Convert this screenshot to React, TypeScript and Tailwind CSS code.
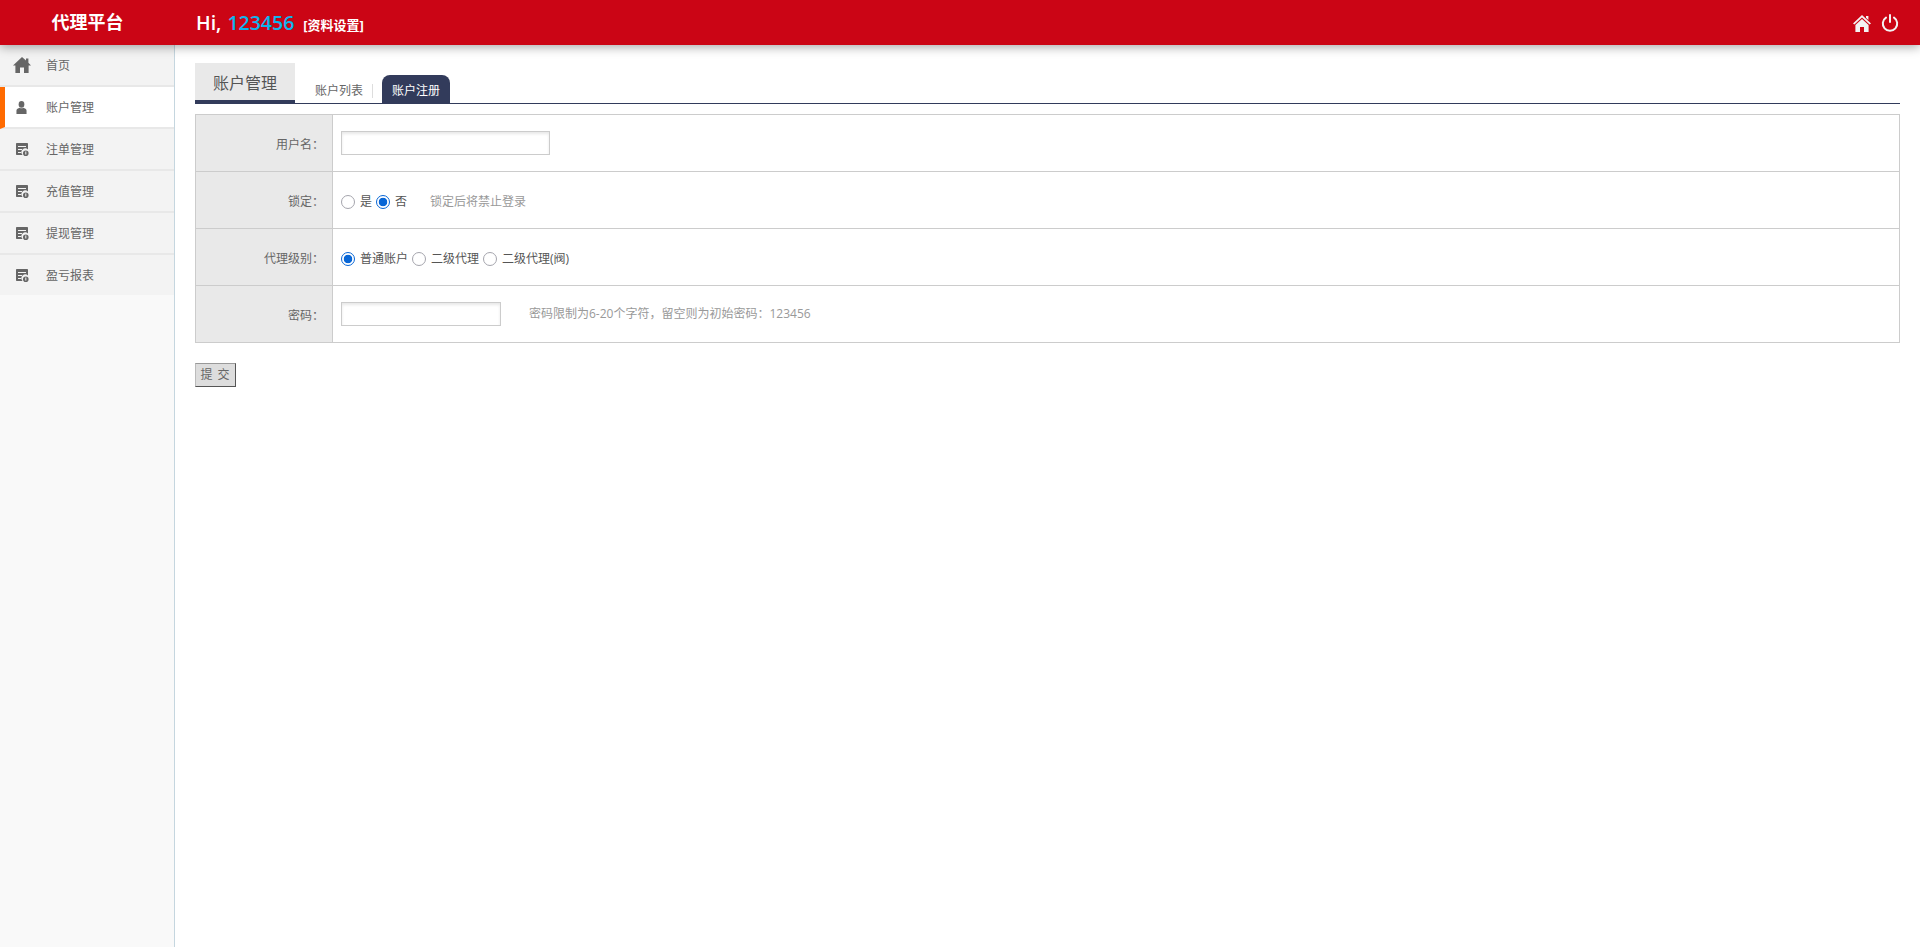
const font = "font-['Open_Sans','Noto_Sans_CJK_SC',sans-serif]";

const TopHomeIcon = () => (
  <svg viewBox="0 0 18 18" className="w-[18px] h-[18px] text-[#f3f3f3]" fill="currentColor">
    <path d="M9 1 L18 9.4 L16.6 10.6 L9 3.6 L1.4 10.6 L0 9.4 Z" />
    <path d="M13 2 H15.4 V6 L13 3.8 Z" />
    <path d="M9 5 L15.6 11 V18 H11 V13 H7 V18 H2.4 V11 Z" />
  </svg>
);

const SideHomeIcon = () => (
  <svg viewBox="0 0 18 16" className="w-[18px] h-[16px] text-[#666]" fill="currentColor">
    <path d="M9 0 L13 3.6 V1.4 H15.4 V5.8 L18 8.4 H15.6 V16 H11 V10.6 H7 V16 H2.4 V8.4 H0 Z" />
  </svg>
);

const UserIcon = () => (
  <svg viewBox="0 0 12 14" className="w-[11px] h-[13px] text-[#666]" fill="currentColor">
    <ellipse cx="6" cy="3.6" rx="3.1" ry="3.6" />
    <path d="M0.5 14 V10.4 C0.5 8.6 2.4 7.6 4 7.2 C5 8 7 8 8 7.2 C9.6 7.6 11.5 8.6 11.5 10.4 V14 Z" />
  </svg>
);

const ReportIcon = () => (
  <svg viewBox="0 0 13 13" className="w-[13px] h-[13px] text-[#666]" fill="currentColor">
    <path d="M0 1 C0 0.4 0.4 0 1 0 H11 C11.6 0 12 0.4 12 1 V6.6 A3.6 3.6 0 0 0 6.6 12 H1 C0.4 12 0 11.6 0 11 Z" />
    <path d="M2 3 H10 V4 H2 Z M2 6 H6 V7 H2 Z M2 9 H5 V10 H2 Z" fill="#f3f3f3" />
    <path fillRule="evenodd" d="M9.8 7.4 A2.8 2.8 0 1 1 9.8 13 A2.8 2.8 0 1 1 9.8 7.4 Z M9.3 8.6 V11.6 H10.3 V8.6 Z" />
  </svg>
);

const PowerIcon = () => (
  <svg viewBox="0 0 18 18" className="w-[18px] h-[18px] text-[#f3f3f3]" fill="none" stroke="currentColor" strokeWidth="2" strokeLinecap="round">
    <path d="M9 1 V8" />
    <path d="M5 3.6 A7.2 7.2 0 1 0 13 3.6" />
  </svg>
);

const menu = ["首页", "账户管理", "注单管理", "充值管理", "提现管理", "盈亏报表"];

const Sidebar = () => (
  <div className="w-[175px] shrink-0 bg-[#f9f9f9] border-r border-[#c5d6df] text-xs text-[#666]">
    {menu.map((name, i) => (
      <div
        key={name}
        className={
          i === 1
            ? "h-[42px] flex items-center bg-white border-b-2 border-[#e8e8e8] border-l-[5px] border-l-[#ff6a00]"
            : i === 5
              ? "h-[40px] flex items-center bg-[#f3f3f3]"
              : "h-[42px] flex items-center bg-[#f3f3f3] border-b-2 border-[#e8e8e8]"
        }
      >
        <span className={i === 1 ? "w-[41px] pl-[11px]" : i === 0 ? "w-[46px] pl-[13px]" : "w-[46px] pl-[16px]"}>
          {i === 0 ? <SideHomeIcon /> : i === 1 ? <UserIcon /> : <ReportIcon />}
        </span>
        <span className="mt-[1px]">{name}</span>
      </div>
    ))}
  </div>
);

const Radio = ({ label, checked }: { label: string; checked?: boolean }) => (
  <label className="flex items-center mr-[4px]">
    <input
      type="radio"
      defaultChecked={checked}
      name={label}
      className="appearance-none w-[14px] h-[14px] mt-[1px] mr-[5px] rounded-full border border-[#a5a5ad] bg-white checked:border-[1.5px] checked:border-[#0866d6] checked:bg-[radial-gradient(circle,#0866d6_0_4px,#fff_4.6px)]"
    />
    {label}
  </label>
);

const Row = ({ label, children }: { label: string; children: React.ReactNode }) => (
  <tr className="h-[57px]">
    <td className="w-[137px] bg-[#e9e9e9] border border-[#ccc] text-right pr-[8px] pt-[3px] text-[#666]">{label}</td>
    <td className="border border-[#ccc] pl-[8px] text-[#555]">
      <div className="flex items-center pt-[3px]">{children}</div>
    </td>
  </tr>
);

const TextInput = ({ width }: { width: string }) => (
  <input type="text" className={`${width} h-[24px] -mt-[3px] border border-[#ccc] bg-white shadow-[inset_0_2px_3px_#e8e8e8]`} />
);

export default function App() {
  return (
    <div className={`${font} min-h-[947px] flex flex-col bg-white`}>
      <div className="relative z-10 h-[45px] flex items-center bg-[#cb0515] text-white shadow-[0_2px_10px_rgba(0,0,0,0.35)]">
        <div className="w-[175px] text-center text-[18px] font-bold">代理平台</div>
        <div className="ml-[21px] flex items-baseline text-[19.5px] font-semibold">
          Hi,
          <span className="ml-[6px] text-[#0fb4ee]">123456</span>
          <span className="ml-[9px] text-[13px] font-bold">[资料设置]</span>
        </div>
        <div className="ml-auto mr-[21px] flex items-center gap-[10px]">
          <TopHomeIcon />
          <PowerIcon />
        </div>
      </div>

      <div className="flex flex-1">
        <Sidebar />
        <div className="flex-1 pt-[18px] px-[20px] text-xs">
          <div className="flex items-end h-[41px] border-b border-[#323b5b]">
            <div className="w-[100px] h-[41px] -mb-[1px] pt-[2px] flex items-center justify-center bg-[#e9e9e9] border-b-4 border-[#323b5b] text-base text-[#555]">
              账户管理
            </div>
            <div className="ml-[20px] mb-[5px] pr-[9px] border-r border-[#ddd] leading-[14px] text-[#666]">账户列表</div>
            <div className="ml-[9px] w-[68px] h-[28px] pt-[3px] flex items-center justify-center rounded-t-lg bg-[#323b5b] text-white">
              账户注册
            </div>
          </div>

          <table className="w-full mt-[10px] border-collapse">
            <tbody>
              <Row label="用户名：">
                <TextInput width="w-[209px]" />
              </Row>
              <Row label="锁定：">
                <Radio label="是" />
                <Radio label="否" checked />
                <span className="ml-[19px] text-[#999]">锁定后将禁止登录</span>
              </Row>
              <Row label="代理级别：">
                <Radio label="普通账户" checked />
                <Radio label="二级代理" />
                <Radio label="二级代理(阀)" />
              </Row>
              <Row label="密码：">
                <TextInput width="w-[160px]" />
                <span className="ml-[28px] -mt-[4px] text-[#999]">密码限制为6-20个字符，留空则为初始密码：123456</span>
              </Row>
            </tbody>
          </table>

          <button className="block mt-[20px] w-[41px] h-[24px] bg-[#ddd] border-t border-l border-t-[#999] border-l-[#bbb] border-r border-b border-r-[#555] border-b-[#555] text-[#666] tracking-[1px]">
            提 交
          </button>
        </div>
      </div>
    </div>
  );
}
